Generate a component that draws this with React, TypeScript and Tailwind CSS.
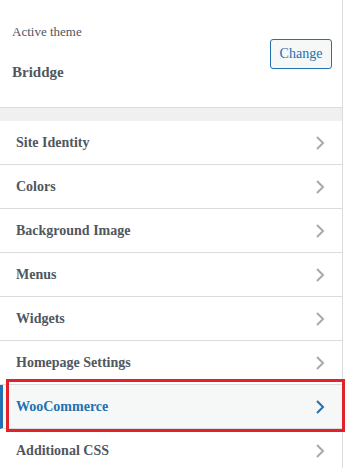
import React from 'react'

const sections = [
  'Site Identity',
  'Colors',
  'Background Image',
  'Menus',
  'Widgets',
  'Homepage Settings',
  'WooCommerce',
  'Additional CSS',
]

function Chevron({ active }: { active?: boolean }) {
  return (
    <svg width="10" height="16" viewBox="0 0 10 16" className="shrink-0">
      <polyline
        points="2,2 8,8 2,14"
        fill="none"
        stroke={active ? '#2271b1' : '#a7aaad'}
        strokeWidth="2"
      />
    </svg>
  )
}

export default function App() {
  return (
    <div className="relative w-[346px] h-[468px] overflow-hidden bg-white font-['Liberation_Serif',serif]">
      <div className="w-[343px] h-full border-r border-[#dcdcde]">
        {/* Active theme */}
        <div className="h-[108px] border-b border-[#dcdcde] flex items-center justify-between pl-3 pr-[10px]">
          <div className="self-start pt-[23px]">
            <div className="text-[13px] leading-[18px] text-[#50575e]">Active theme</div>
            <div className="mt-[21px] text-[15px] leading-5 font-bold text-[#50575e]">Briddge</div>
          </div>
          <button className="h-[30px] w-[62px] rounded-[3px] border border-[#2271b1] bg-[#f6f7f7] text-[14px] text-[#2271b1]">
            Change
          </button>
        </div>
        <div className="h-[13px] bg-[#f0f0f1]" />

        {/* Sections */}
        <ul>
          {sections.map((s) => {
            const active = s === 'WooCommerce'
            return (
              <li
                key={s}
                className={`h-[44px] border-b border-[#dcdcde] flex items-center justify-between pl-4 pr-[17px] ${
                  active ? 'bg-[#f6f7f7] border-l-[3px] border-l-[#2271b1] pl-[13px]' : ''
                }`}
              >
                <span
                  className={`text-[14px] font-bold ${active ? 'text-[#2271b1]' : 'text-[#50575e]'}`}
                >
                  {s}
                </span>
                <Chevron active={active} />
              </li>
            )
          })}
        </ul>
      </div>

      {/* annotation box */}
      <div className="absolute left-[6px] top-[379px] w-[339px] h-[53px] border-[3px] border-[#e0232b] pointer-events-none" />
    </div>
  )
}
